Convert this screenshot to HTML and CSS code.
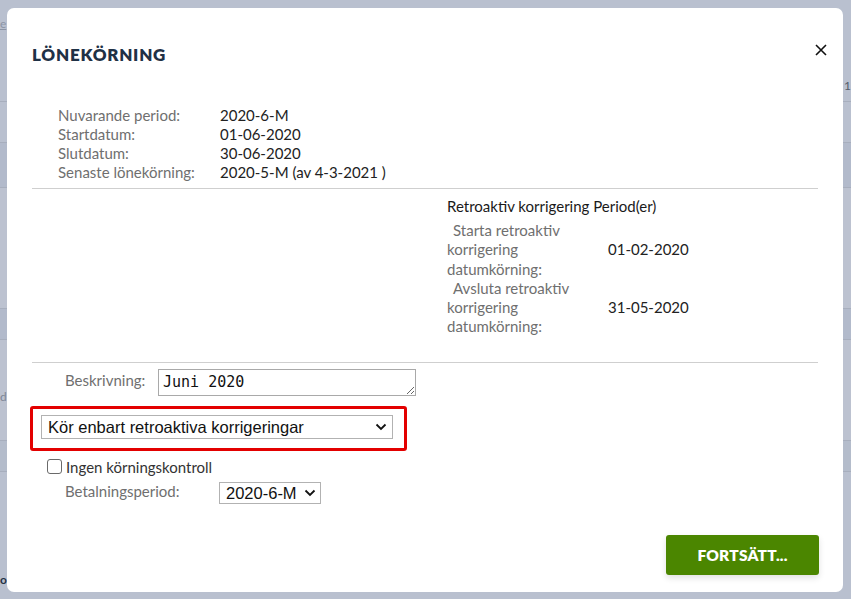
FILE: index.html
```html
<!DOCTYPE html>
<html lang="sv">
<head>
<meta charset="utf-8">
<title>Lönekörning</title>
<link rel="stylesheet" href="styles.css">
</head>
<body>
<div class="page">
  <div class="bg-row bg-top"><span class="bg-link">e</span></div>
  <div class="bg-row bg-a"><span class="bg-num">1</span></div>
  <div class="bg-row bg-b"></div>
  <div class="bg-row bg-c"></div>
  <div class="bg-row bg-d"></div>
  <div class="bg-row bg-e"><span class="bg-txt">d</span></div>
  <div class="bg-row bg-f"></div>
  <div class="bg-row bg-g"><span class="bg-bold">o</span></div>
</div>

<div class="modal" role="dialog">
  <div class="modal-head">
    <h1 class="title">LÖNEKÖRNING</h1>
    <button class="close" aria-label="Stäng">
      <svg width="12" height="12" viewBox="0 0 12 12"><path d="M1 1L11 11M11 1L1 11" stroke="#111" stroke-width="1.6" fill="none"/></svg>
    </button>
  </div>

  <table class="info">
    <tr><td class="lbl">Nuvarande period:</td><td class="val">2020-6-M</td></tr>
    <tr><td class="lbl">Startdatum:</td><td class="val">01-06-2020</td></tr>
    <tr><td class="lbl">Slutdatum:</td><td class="val">30-06-2020</td></tr>
    <tr><td class="lbl">Senaste lönekörning:</td><td class="val">2020-5-M (av 4-3-2021 )</td></tr>
  </table>

  <hr class="sep">

  <div class="retro">
    <div class="retro-head">Retroaktiv korrigering Period(er)</div>
    <table class="retro-table">
      <tr><td class="rlbl"><span class="ind">Starta retroaktiv</span> korrigering datumkörning:</td><td class="val">01-02-2020</td></tr>
      <tr><td class="rlbl"><span class="ind">Avsluta retroaktiv</span> korrigering datumkörning:</td><td class="val">31-05-2020</td></tr>
    </table>
  </div>

  <hr class="sep sep2">

  <div class="desc-row">
    <label class="flbl" for="desc">Beskrivning:</label>
    <textarea id="desc" class="desc">Juni 2020</textarea>
  </div>

  <div class="highlight">
    <div class="sel-wrap sel-wide">
      <select class="sel"><option>Kör enbart retroaktiva korrigeringar</option></select>
      <svg class="chev" width="12" height="8" viewBox="0 0 12 8"><path d="M1.5 1.5L6 6L10.5 1.5" stroke="#111" stroke-width="1.8" fill="none"/></svg>
    </div>
  </div>

  <label class="check-row"><input type="checkbox" class="cb"><span>Ingen körningskontroll</span></label>

  <div class="pay-row">
    <span class="flbl">Betalningsperiod:</span>
    <div class="sel-wrap sel-small">
      <select class="sel"><option>2020-6-M</option></select>
      <svg class="chev" width="12" height="8" viewBox="0 0 12 8"><path d="M1.5 1.5L6 6L10.5 1.5" stroke="#111" stroke-width="1.8" fill="none"/></svg>
    </div>
  </div>

  <div class="foot">
    <button class="primary">FORTSÄTT...</button>
  </div>
</div>
</body>
</html>
```

FILE: styles.css
```css
html, body {
  margin: 0;
  padding: 0;
}
body {
  width: 851px;
  height: 599px;
  overflow: hidden;
  background: #b9c0cf;
  font-family: Lato, "Noto Sans", sans-serif;
}

/* faded page behind the overlay */
.page {
  display: flex;
  flex-direction: column;
}
.bg-row {
  border-bottom: 1px solid #a7aebd;
  position: relative;
  color: #7d8595;
  font-size: 14px;
}
.bg-top { height: 101px; }
.bg-a { height: 40px; }
.bg-b { height: 44px; background: #b2bacb; }
.bg-c { height: 120px; background: #bcc2d0; }
.bg-d { height: 30px; background: #b2bacb; }
.bg-e { height: 100px; background: #bcc2d0; }
.bg-f { height: 30px; background: #b4bccb; }
.bg-g { height: 130px; border-bottom: 0; }
.bg-link { position: absolute; left: 0; top: 16px; color: #8d95a6; text-decoration: underline; font-size: 12px; }
.bg-num { position: absolute; right: 0; top: -24px; color: #555d6b; font-size: 12px; }
.bg-txt { position: absolute; left: 0; top: 49px; font-size: 12px; }
.bg-bold { position: absolute; left: 0; top: 100px; color: #253245; font-weight: bold; font-size: 12px; }

/* dialog */
.modal {
  position: absolute;
  left: 7px;
  top: 8px;
  width: 836px;
  height: 584px;
  box-sizing: border-box;
  background: #fff;
  border-radius: 7px;
  padding: 0 25px;
  display: flex;
  flex-direction: column;
}
.modal-head {
  display: flex;
  justify-content: space-between;
  align-items: center;
  height: 52px;
  padding-top: 20px;
}
.title {
  margin: 0;
  font-size: 17px;
  font-weight: 800;
  letter-spacing: 0.75px;
  color: #1f3146;
}
.close {
  border: 0;
  background: none;
  padding: 0;
  margin-right: -10px;
  margin-top: -8px;
  width: 14px;
  height: 14px;
  display: flex;
  align-items: center;
  justify-content: center;
}

.info {
  border-collapse: collapse;
  margin: 26px 0 0 26px;
  font-size: 15px;
}
.info td {
  padding: 0;
  height: 19px;
  line-height: 19px;
}
.lbl {
  width: 162px;
  color: #6f6f6f;
}
.val {
  color: #222;
}

.sep {
  border: 0;
  border-top: 1px solid #cfcfcf;
  margin: 6px 0 0 0;
  height: 0;
}
.sep2 { margin-top: 25px; }

.retro {
  margin-left: 415px;
  padding-top: 8px;
  font-size: 15px;
}
.retro-head {
  color: #1a1a1a;
  line-height: 19px;
  margin-bottom: 5px;
}
.retro-table {
  border-collapse: collapse;
}
.retro-table td {
  padding: 0;
  line-height: 19.3px;
}
.rlbl {
  width: 161px;
  color: #6f6f6f;
}
.rlbl .ind {
  padding-left: 6px;
}
.retro-table td.val { vertical-align: middle; }
.rlbl { padding-right: 28px !important; box-sizing: border-box; }

.desc-row {
  display: flex;
  align-items: flex-start;
  margin-top: 6px;
}
.flbl {
  font-size: 15px;
  color: #6f6f6f;
  padding-left: 33px;
  flex: none;
}
.desc-row .flbl { width: 93px; padding-top: 2px; }
.desc {
  box-sizing: border-box;
  width: 258px;
  height: 27px;
  border: 1px solid #a9a9a9;
  padding: 2px 4px;
  font-family: "DejaVu Sans Mono", monospace;
  font-size: 15px;
  line-height: 20px;
  color: #111;
  resize: both;
  overflow: hidden;
  margin: 0;
}

.highlight {
  margin: 10px 0 0 -2px;
  width: 377px;
  height: 45px;
  box-sizing: border-box;
  border: 3px solid #e30000;
  border-radius: 3px;
  padding: 6px 0 0 8px;
}
.sel-wrap {
  position: relative;
  display: flex;
}
.sel {
  appearance: none;
  -webkit-appearance: none;
  box-sizing: border-box;
  width: 100%;
  border: 1px solid #b2b2b2;
  border-radius: 0;
  background: #fff;
  font-family: "Liberation Sans", Arial, sans-serif;
  color: #111;
  margin: 0;
}
.sel-wide { width: 352px; }
.sel-wide .sel {
  height: 24px;
  font-size: 16.5px;
  padding: 0 0 0 6px;
}
.sel-small { width: 102px; }
.sel-small .sel {
  height: 22px;
  font-size: 16.5px;
  padding: 0 0 0 6px;
}
.chev {
  position: absolute;
  right: 6px;
  top: 50%;
  margin-top: -4px;
  pointer-events: none;
}
.sel-small .chev { right: 5px; }

.check-row {
  display: flex;
  align-items: center;
  margin: 7px 0 0 15px;
  font-size: 15px;
  color: #333;
}
.cb {
  appearance: none;
  -webkit-appearance: none;
  width: 15px;
  height: 15px;
  margin: 0 4px 0 0;
  border: 1px solid #6a6a6a;
  border-radius: 3px;
  background: #fff;
}

.pay-row {
  display: flex;
  align-items: center;
  margin-top: 6px;
}
.pay-row .flbl { width: 154px; margin-top: -4px; }

.foot {
  margin-top: auto;
  display: flex;
  justify-content: flex-end;
  padding-bottom: 17px;
  margin-right: -1px;
}
.primary {
  width: 153px;
  height: 40px;
  border: 0;
  border-radius: 3px;
  background: #4b8600;
  color: #fff;
  font-family: Lato, "Noto Sans", sans-serif;
  font-weight: 800;
  font-size: 15.5px;
  letter-spacing: 0.2px;
  box-shadow: 0 3px 6px rgba(0,0,0,0.12);
}
```
